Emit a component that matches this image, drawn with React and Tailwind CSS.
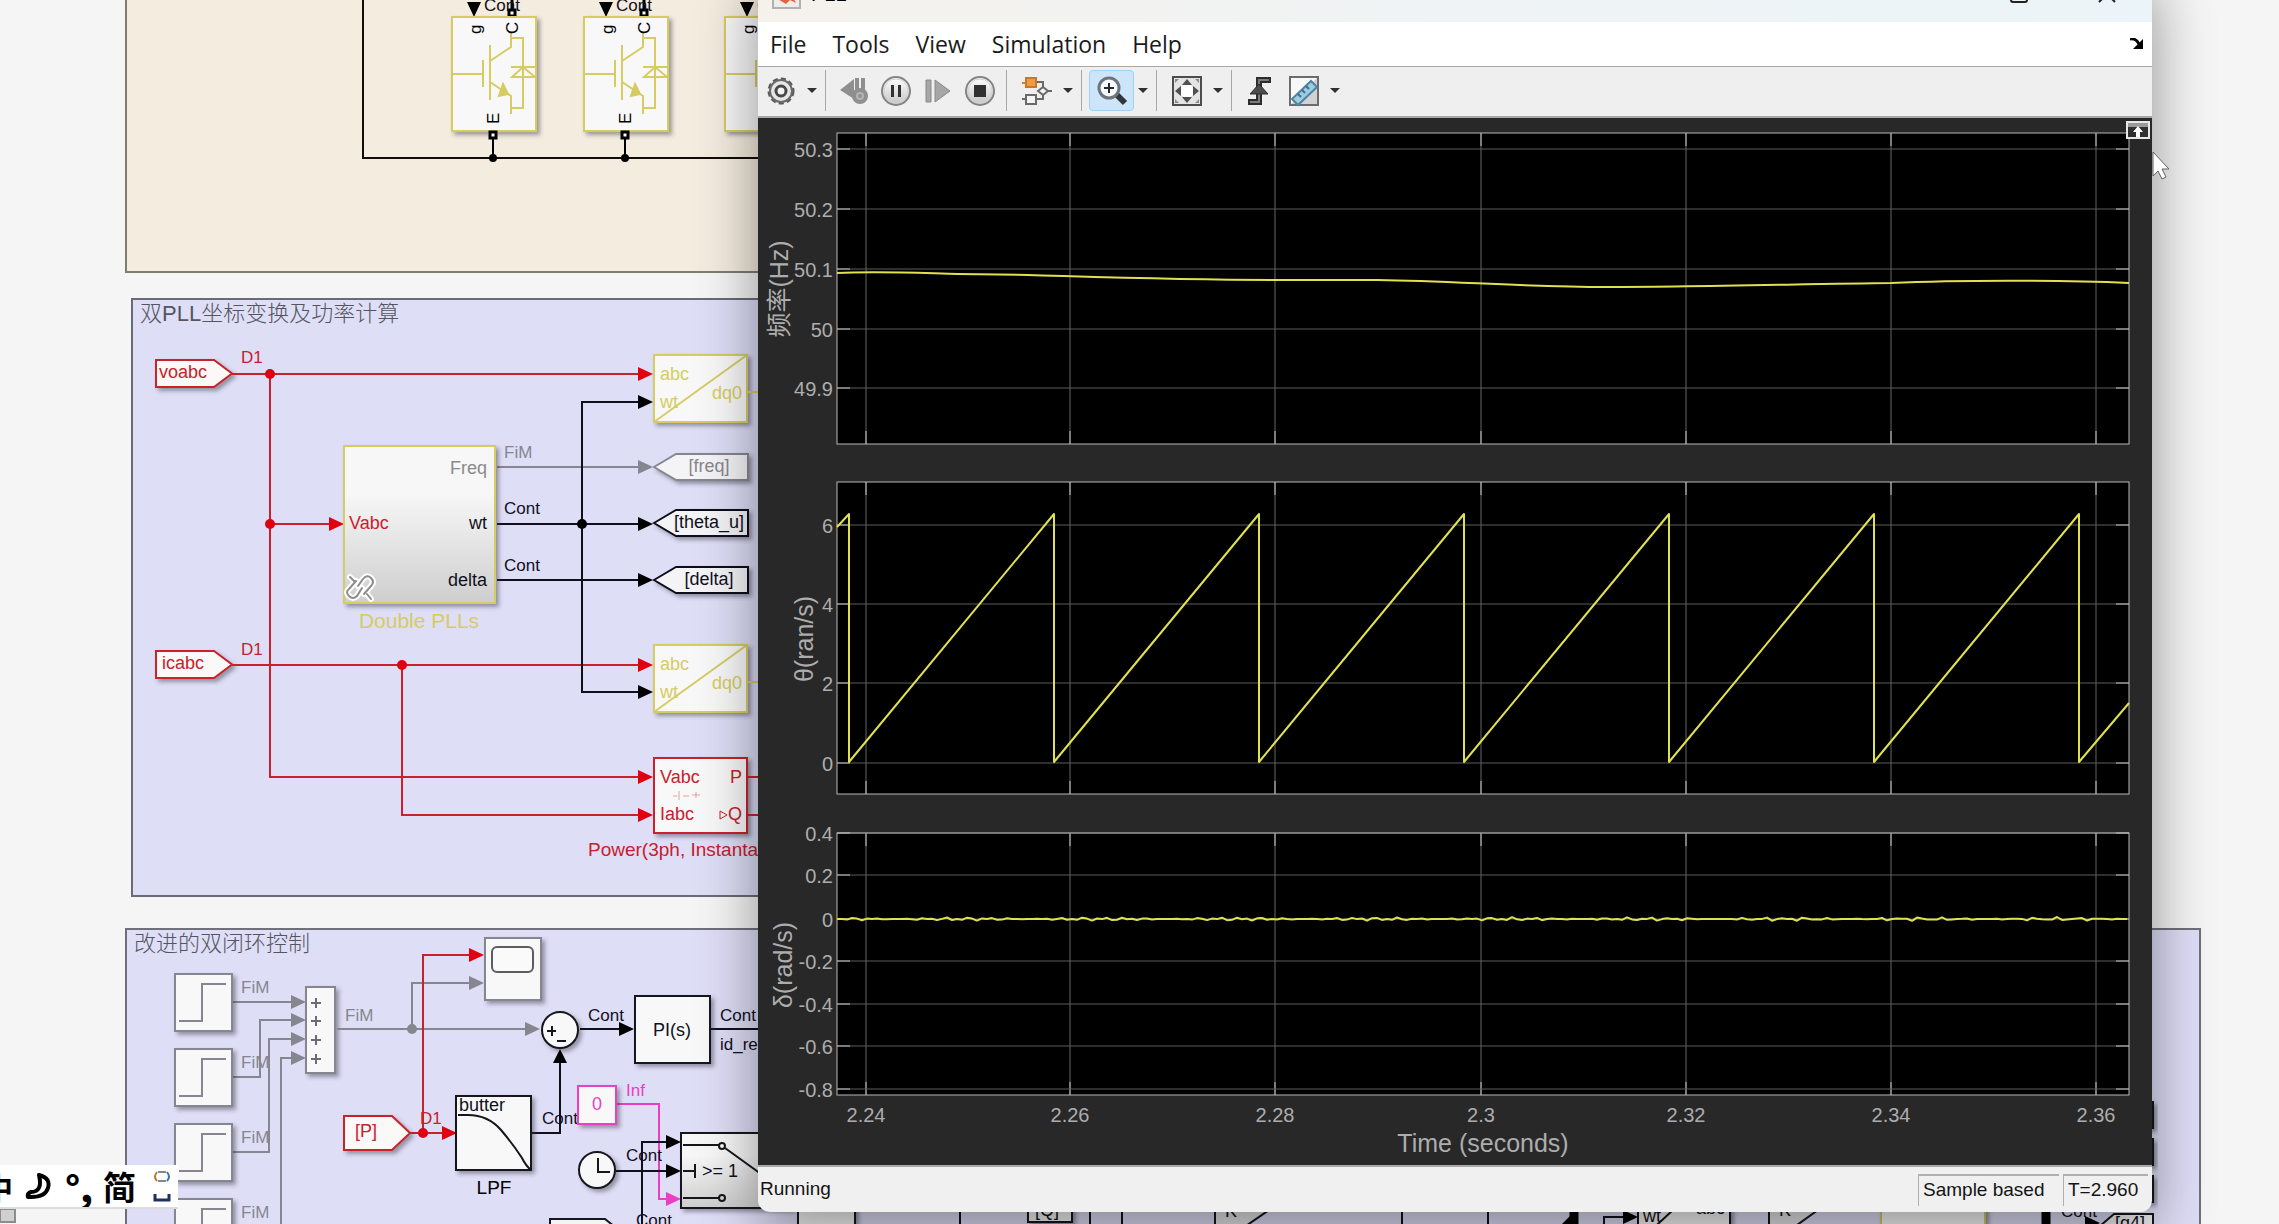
const RED = "#c8202c";
const GOLD = "#d6cc62";
const GRAY = "#868690";
const PINK = "#ea3fc4";

/* ---------- model canvas ---------- */

const Arrow = ({ x, y, color = "#000", up }) => (
  <path
    d={up ? `M${x} ${y}l-7 14h14z` : `M${x} ${y}l-15 -7v14z`}
    fill={color === RED ? "#e00010" : color}
  />
);

const Wire = ({ d, color = "#10101c", width = 2 }) => (
  <path d={d} fill="none" stroke={color} strokeWidth={width} />
);

const Dot = ({ x, y, color = "#000" }) => (
  <circle cx={x} cy={y} r="5" fill={color === RED ? "#e00010" : color} />
);

const Block = ({ x, y, w, h, color = "#16161c", fill = "#f8f8f8" }) => (
  <rect x={x} y={y} width={w} height={h} fill={fill} stroke={color} strokeWidth="2" filter="url(#drop)" />
);

// signal rate label
const Rate = ({ x, y, color = "#10101c", children }) => (
  <text x={x} y={y} fill={color} className="text-[17px]">
    {children}
  </text>
);

const Label = ({ x, y, color = "#10101c", anchor = "start", children }) => (
  <text x={x} y={y} fill={color} textAnchor={anchor} className="text-[18px]">
    {children}
  </text>
);

const Igbt = ({ x }) => (
  <g transform={`translate(${x} 0)`}>
    <path d="M16 2h14l-7 15z" />
    <path d="M61 0v10" stroke="#000" strokeWidth="3" />
    <rect x="58" y="10" width="6" height="6" fill="#fff" stroke="#000" strokeWidth="3" />
    <Rate x={33} y={11}>Cont</Rate>
    <Block x={1} y={17} w={84} h={114} color={GOLD} />
    <g fill="none" stroke={GOLD} strokeWidth="2">
      <path d="M2 74h29M32 60v27M39 45v55M39 61l21 -14v-14M39 82l21 14v18M60 38h12v70h-12" />
      <path d="M60 67h25M61 77h23l-12 -10z" />
      <path d="M52 84l5 10l-9 2z" fill={GOLD} />
    </g>
    <text transform="translate(30 34) rotate(-90)" className="text-[17px]">g</text>
    <text transform="translate(67 34) rotate(-90)" className="text-[17px]">C</text>
    <text transform="translate(48 124) rotate(-90)" className="text-[17px]">E</text>
    <rect x="39" y="132" width="6" height="6" fill="#fff" stroke="#000" strokeWidth="3" />
    <path d="M42 139v19" stroke="#000" strokeWidth="2" />
    <circle cx="42" cy="158" r="4" />
  </g>
);

const Dq0 = ({ y }) => (
  <g>
    <Block x={654} y={y} w={93} h={67} color={GOLD} />
    <path d={`M654 ${y + 67}L747 ${y}M748 ${y + 37}h10`} stroke={GOLD} strokeWidth="2" />
    <Label x={660} y={y + 25} color={GOLD}>abc</Label>
    <Label x={660} y={y + 53} color={GOLD}>wt</Label>
    <Label x={742} y={y + 44} color={GOLD} anchor="end">dq0</Label>
  </g>
);

const FromTag = ({ x, y, w, h, text }) => (
  <g>
    <path
      d={`M${x} ${y}h${w - 18}l18 ${h / 2}l-18 ${h / 2}h-${w - 18}z`}
      fill="#fbf8f8"
      stroke={RED}
      strokeWidth="2"
      filter="url(#drop)"
    />
    <Label x={x + w / 2 - 11} y={y + h / 2 + 4} color={RED} anchor="middle">
      {text}
    </Label>
  </g>
);

const GotoTag = ({ y, text, color }) => (
  <g>
    <path
      d={`M654 ${y + 13}l22 -13h72v26h-72z`}
      fill="#f4f4f6"
      stroke={color}
      strokeWidth="2"
      filter="url(#drop)"
    />
    <Label x={709} y={y + 18} color={color} anchor="middle">
      {text}
    </Label>
  </g>
);

const StepBlock = ({ y }) => (
  <g>
    <Block x={175} y={y} w={57} h={57} color={GRAY} />
    <path d={`M179 ${y + 47}h23v-37h24`} fill="none" stroke={GRAY} strokeWidth="2" />
    <Rate x={241} y={y + 19} color={GRAY}>FiM</Rate>
  </g>
);

const PowerStage = () => (
  <g>
    <rect x="126" y="-4" width="700" height="276" fill="#f4ecdf" stroke="#7d7d70" strokeWidth="2" />
    <Wire d="M363 0V158H800" color="#100c08" />
    <Igbt x={451} />
    <Igbt x={583} />
    <Igbt x={724} />
  </g>
);

const PllArea = () => (
  <g>
    <rect x="132" y="299" width="700" height="597" fill="#dedef7" stroke="#6a6a78" strokeWidth="2" />
    <text x="140" y="321" fill="#55555f" className="text-[22px] font-light">
      双PLL坐标变换及功率计算
    </text>

    <FromTag x={156} y={360} w={76} h={27} text="voabc" />
    <Rate x={241} y={363} color={RED}>D1</Rate>
    <Wire d="M232 374H640M270 374V777H640M270 524H330" color={RED} />
    <Dot x={270} y={374} color={RED} />
    <Dot x={270} y={524} color={RED} />
    <Arrow x={653} y={374} color={RED} />
    <Arrow x={344} y={524} color={RED} />
    <Arrow x={653} y={777} color={RED} />

    <FromTag x={156} y={651} w={76} h={27} text="icabc" />
    <Rate x={241} y={655} color={RED}>D1</Rate>
    <Wire d="M232 665H640M402 665V815H640" color={RED} />
    <Dot x={402} y={665} color={RED} />
    <Arrow x={653} y={665} color={RED} />
    <Arrow x={653} y={815} color={RED} />

    <Wire d="M497 467H640" color={GRAY} />
    <Arrow x={653} y={467} color={GRAY} />
    <Wire d="M497 524H640M497 580H640M640 402H582V692H640" />
    <Dot x={582} y={524} />
    <Arrow x={653} y={402} />
    <Arrow x={653} y={524} />
    <Arrow x={653} y={580} />
    <Arrow x={653} y={692} />
    <Rate x={504} y={458} color={GRAY}>FiM</Rate>
    <Rate x={504} y={514}>Cont</Rate>
    <Rate x={504} y={571}>Cont</Rate>

    <Block x={344} y={446} w={151} h={157} color={GOLD} fill="url(#subsystem)" />
    <Label x={487} y={474} color="#8a8a8a" anchor="end">Freq</Label>
    <Label x={349} y={529} color={RED}>Vabc</Label>
    <Label x={487} y={529} anchor="end">wt</Label>
    <Label x={487} y={586} anchor="end">delta</Label>
    <text x="419" y="628" fill={GOLD} textAnchor="middle" className="text-[21px]">
      Double PLLs
    </text>
    <g fill="none" strokeLinecap="round">
      <path
        d="M358 586l5 -7q4 -5 8 -1t0 8l-7 8M362 588l-5 8q-4 4 -8 0t0 -7l7 -8M350 577l5 5M367 594l4 5"
        stroke="#fff"
        strokeWidth="6"
      />
      <path
        d="M358 586l5 -7q4 -5 8 -1t0 8l-7 8M362 588l-5 8q-4 4 -8 0t0 -7l7 -8M350 577l5 5M367 594l4 5"
        stroke="#8c8c8c"
        strokeWidth="2"
      />
    </g>

    <Dq0 y={355} />
    <Dq0 y={645} />
    <GotoTag y={454} text="[freq]" color={GRAY} />
    <GotoTag y={510} text="[theta_u]" color="#10101c" />
    <GotoTag y={567} text="[delta]" color="#10101c" />

    <Block x={654} y={758} w={93} h={75} color={RED} />
    <Wire d="M748 777h20M748 815h20" color={RED} />
    <Label x={660} y={783} color={RED}>Vabc</Label>
    <Label x={742} y={783} color={RED} anchor="end">P</Label>
    <Label x={660} y={820} color={RED}>Iabc</Label>
    <Label x={742} y={820} color={RED} anchor="end">Q</Label>
    <path d="M720 811v8l7 -4z" fill="none" stroke={RED} />
    <path d="M673 796h4M679 791v9M683 796h6M692 795h8M696 792v6" stroke={RED} opacity="0.4" />
    <text x="588" y="856" fill={RED} className="text-[19px]">
      Power(3ph, Instantan
    </text>
  </g>
);

const ControlArea = () => (
  <g>
    <rect x="126" y="929" width="2074" height="310" fill="#dfdef7" stroke="#70707c" strokeWidth="2" />
    <text x="134" y="951" fill="#55555f" className="text-[22px] font-light">
      改进的双闭环控制
    </text>

    <Wire d="M233 1002H294M233 1077H260V1020H294M233 1152H269V1039H294M281 1224V1058H294" color={GRAY} />
    <StepBlock y={974} />
    <StepBlock y={1049} />
    <StepBlock y={1124} />
    <StepBlock y={1199} />
    <Block x={306} y={987} w={29} h={86} color={GRAY} />
    {[1002, 1020, 1039, 1058].map((y) => (
      <g key={y}>
        <Arrow x={306} y={y} color={GRAY} />
        <path d={`M311 ${y + 1}h10M316 ${y - 4}v10`} stroke="#6c6c74" strokeWidth="2" />
      </g>
    ))}

    <Wire d="M337 1029H528M412 1029V983H472" color={GRAY} />
    <Rate x={345} y={1021} color={GRAY}>FiM</Rate>
    <Dot x={412} y={1029} color={GRAY} />
    <Arrow x={484} y={983} color={GRAY} />
    <Arrow x={540} y={1029} color={GRAY} />
    <Wire d="M410 1133H445M423 1133V955H472" color={RED} />
    <Arrow x={484} y={955} color={RED} />
    <Arrow x={457} y={1133} color={RED} />
    <Dot x={423} y={1133} color={RED} />
    <Rate x={420} y={1124} color={RED}>D1</Rate>
    <FromTag x={344} y={1116} w={66} h={34} text="[P]" />

    <Block x={485} y={938} w={56} h={62} color={GRAY} />
    <rect x="492" y="947" width="41" height="25" rx="5" fill="#fafafa" stroke="#5c5c62" strokeWidth="2" />

    <circle cx="560" cy="1030" r="18" fill="#f8f8f8" stroke="#16161c" strokeWidth="2" filter="url(#drop)" />
    <path d="M547 1031h9M552 1026v10M557 1041h9" stroke="#16161c" strokeWidth="2" />
    <Wire d="M580 1029H622M711 1029H760M532 1133H560V1062" />
    <Arrow x={634} y={1029} />
    <Arrow x={560} y={1049} up />
    <Block x={635} y={996} w={75} h={67} />
    <Label x={672} y={1036} anchor="middle">PI(s)</Label>
    <Rate x={588} y={1021}>Cont</Rate>
    <Rate x={720} y={1021}>Cont</Rate>
    <Rate x={720} y={1050}>id_ref</Rate>

    <Block x={456} y={1096} w={75} h={74} />
    <path d="M458 1115h10q20 0 33 15q12 14 21 28q4 8 9 12" fill="none" stroke="#16161c" strokeWidth="2" />
    <Label x={459} y={1111}>butter</Label>
    <text x="494" y="1194" textAnchor="middle" className="text-[19px]">LPF</text>
    <Rate x={542} y={1124}>Cont</Rate>

    <Wire d="M617 1104H659V1199H670" color={PINK} />
    <Arrow x={681} y={1199} color={PINK} />
    <Block x={578} y={1086} w={38} h={38} color={PINK} />
    <Label x={597} y={1110} color={PINK} anchor="middle">0</Label>
    <Rate x={626} y={1096} color={PINK}>Inf</Rate>

    <circle cx="597" cy="1170" r="18" fill="#f8f8f8" stroke="#16161c" strokeWidth="2" filter="url(#drop)" />
    <path d="M598 1158v14h12" fill="none" stroke="#16161c" strokeWidth="2" />
    <Wire d="M616 1171H670M642 1224V1142H670" />
    <Arrow x={681} y={1142} />
    <Arrow x={681} y={1171} />
    <Rate x={626} y={1161}>Cont</Rate>
    <Rate x={636} y={1226}>Cont</Rate>
    <Block x={681} y={1133} w={110} h={75} fill="url(#subsystem)" />
    <g fill="none" stroke="#16161c" strokeWidth="2">
      <path d="M683 1145h36M725 1148l36 26M683 1171h11M695 1164v14M683 1198h36" />
      <circle cx="722" cy="1146" r="3" />
      <circle cx="722" cy="1198" r="3" />
      <path d="M550 1230v-11h55l10 8" fill="#f4f4f4" />
    </g>
    <Label x={702} y={1177}>&gt;= 1</Label>

    {/* second row of blocks, mostly behind the scope window */}
    <Block x={798} y={1180} w={57} h={60} />
    <Wire d="M960 1190V1224M1090 1190V1224M1122 1190V1224M1402 1190V1224M1488 1190V1224" />
    <Block x={1028} y={1190} w={44} h={32} />
    <Label x={1035} y={1216}>[Q]</Label>
    <path d="M1215 1190L1275 1206L1240 1230H1215z" fill="#e6e6ea" stroke="#16161c" strokeWidth="2" />
    <Label x={1225} y={1217}>K</Label>
    <path d="M1574 1190V1224M2046 1190V1224" stroke="#000" strokeWidth="9" />
    <path d="M1562 1224l14 -14v14z" />
    <Wire d="M1604 1224V1217H1625" />
    <Arrow x={1638} y={1217} />
    <Block x={1638} y={1180} w={92} h={60} />
    <path d="M1645 1236L1673 1210" stroke="#16161c" strokeWidth="2" />
    <Label x={1643} y={1222}>wt</Label>
    <Label x={1696} y={1214}>abc</Label>
    <path d="M1769 1190L1825 1205L1790 1230H1769z" fill="#e6e6ea" stroke="#16161c" strokeWidth="2" />
    <Label x={1779} y={1216}>K</Label>
    <Block x={1881} y={1180} w={104} h={60} color={GOLD} />
    <Rate x={2061} y={1217}>Cont</Rate>
    <Arrow x={2100} y={1223} />
    <path d="M2100 1226l14 -12h39v16" fill="#f4f4f6" stroke="#16161c" strokeWidth="2" />
    <Label x={2115} y={1229}>[q4]</Label>
    {[1102, 1139, 1176].map((y) => (
      <rect key={y} x="2138" y={y} width="15" height="26" fill="#f4f4f6" stroke="#16161c" strokeWidth="2" filter="url(#drop)" />
    ))}
  </g>
);

const ModelCanvas = () => (
  <svg
    viewBox="0 0 2279 1224"
    className="block w-full h-auto font-['Liberation_Sans','Noto_Sans_CJK_SC',sans-serif]"
  >
    <defs>
      <filter id="drop" x="-20%" y="-20%" width="150%" height="150%">
        <feDropShadow dx="3" dy="3" stdDeviation="2" floodColor="#303040" floodOpacity="0.45" />
      </filter>
      <linearGradient id="subsystem" x1="0" y1="0" x2="0" y2="1">
        <stop offset="0.3" stopColor="#f7f7f7" />
        <stop offset="1" stopColor="#cecece" />
      </linearGradient>
    </defs>
    <PowerStage />
    <PllArea />
    <ControlArea />
    <path d="M0 1209h15v13h-15z" fill="#d0d0d0" stroke="#8c8c8c" strokeWidth="2" />
  </svg>
);

/* ---------- toolbar icons ---------- */

const GearIcon = () => (
  <svg width="30" height="30" viewBox="0 0 30 30">
    <circle cx="15" cy="15" r="12" fill="none" stroke="#5a5a5a" strokeWidth="3" strokeDasharray="5 3" />
    <circle cx="15" cy="15" r="11" fill="#e6e6e6" stroke="#6a6a6a" strokeWidth="2" />
    <circle cx="15" cy="15" r="5" fill="#f4f4f4" stroke="#484848" strokeWidth="3" />
  </svg>
);

const StepBackIcon = () => (
  <svg width="30" height="30" viewBox="0 0 30 30" fill="#8f8f8f">
    <path d="M1 14L15 3V23zM16 2h4v12h-4zM22 2h4v12h-4z" />
    <circle cx="21" cy="20" r="8" />
    <circle cx="21" cy="20" r="3" fill="none" stroke="#b4b4b4" strokeWidth="2" />
  </svg>
);

const RoundIcon = ({ children }) => (
  <svg width="32" height="32" viewBox="0 0 32 32">
    <circle cx="16" cy="16" r="14" fill="url(#knob)" stroke="#848484" strokeWidth="2" />
    <circle cx="16" cy="16" r="12" fill="none" stroke="#d2d2d2" strokeWidth="1" />
    <defs>
      <linearGradient id="knob" x1="0" y1="0" x2="0" y2="1">
        <stop offset="0" stopColor="#ffffff" />
        <stop offset="1" stopColor="#c4c4c4" />
      </linearGradient>
    </defs>
    {children}
  </svg>
);

const StepForwardIcon = () => (
  <svg width="28" height="28" viewBox="0 0 28 28" fill="#a6a6a6" stroke="#8a8a8a">
    <path d="M2 3h5v22h-5zM11 3v22L26 14z" />
  </svg>
);

const ModelIcon = () => (
  <svg width="32" height="32" viewBox="0 0 32 32" fill="none" stroke="#6a6a6a" strokeWidth="2">
    <path d="M1 8h4" stroke="#d98230" />
    <rect x="5" y="3" width="10" height="9" fill="#ef9b45" stroke="#d27520" />
    <path d="M16 7h6v6M1 24h4M16 24h6v-5M27 16h4" />
    <rect x="5" y="20" width="10" height="9" fill="#f4f4f4" />
    <path d="M17 16l5 -4l5 4l-5 4z" fill="#f4f4f4" />
  </svg>
);

const ZoomIcon = () => (
  <svg width="32" height="32" viewBox="0 0 32 32">
    <path d="M20 19l9 9" stroke="#30363c" strokeWidth="6" />
    <circle cx="13" cy="13" r="10" fill="#f6fafc" stroke="#6c747c" strokeWidth="3" />
    <path d="M8 13h10M13 8v10" stroke="#24282c" strokeWidth="2" />
  </svg>
);

const FitIcon = () => (
  <svg width="32" height="32" viewBox="0 0 32 32">
    <rect x="2" y="2" width="28" height="28" fill="#e4e4e4" stroke="#4c4c4c" strokeWidth="2" />
    <circle cx="16" cy="16" r="7" fill="#fff" />
    <path d="M16 4l5 6h-10zM16 28l5 -6h-10zM4 16l6 -5v10zM28 16l-6 -5v10z" fill="#505050" />
    <path d="M4 4h4l-4 4zM28 4h-4l4 4zM4 28h4l-4 -4zM28 28h-4l4 -4z" fill="#8c8c8c" />
  </svg>
);

const TriggerIcon = () => (
  <svg width="30" height="32" viewBox="0 0 30 32">
    <path d="M3 27h11V5h12" fill="none" stroke="#2c2c2c" strokeWidth="6" />
    <path d="M5 27h9V5h10" fill="none" stroke="#7c7c7c" strokeWidth="2" />
    <path d="M14 9l9 10h-18z" fill="#4c4c4c" stroke="#2c2c2c" />
  </svg>
);

const MeasureIcon = () => (
  <svg width="32" height="32" viewBox="0 0 32 32">
    <path d="M2 2h28v28h-28z" fill="#f8f8f8" stroke="#6c6c6c" strokeWidth="2" />
    <path d="M29 3v26h-26z" fill="#d2d2d2" />
    <path d="M23 6l6 6l-19 18l-6 -6z" fill="#9fcbe0" stroke="#4b84a4" strokeWidth="2" />
    <path d="M10 19l3 3M14 15l3 3M18 11l3 3" stroke="#3c7090" strokeWidth="2" />
  </svg>
);

/* ---------- scope window ---------- */

const ToolButton = ({ label, wide, active, children }) => (
  <button
    type="button"
    aria-label={label}
    className={`flex h-[41px] items-center justify-center rounded-sm border ${wide ? "w-[45px]" : "w-[42px]"} ${
      active ? "border-[#9fd0f5] bg-[#cce5fb]" : "border-transparent"
    }`}
  >
    {children}
  </button>
);

const MenuArrow = ({ label }) => (
  <button type="button" aria-label={label} className="flex h-[41px] w-[17px] items-center justify-center">
    <svg width="10" height="6" viewBox="0 0 10 6">
      <path d="M0 0h10l-5 5z" fill="#303030" />
    </svg>
  </button>
);

const ToolGroup = ({ first, children }) => (
  <div className={`flex items-center pr-[5px] ${first ? "" : "border-l border-[#a8a8a8] pl-[7px]"}`}>{children}</div>
);

const TitleBar = () => (
  <header className="flex h-14 shrink-0 items-center bg-linear-to-r from-[#f5f2ec] via-[#eff3f5] to-[#ebf4f8] px-3.5">
    <svg width="29" height="29" viewBox="0 0 29 29">
      <rect x="1" y="1" width="27" height="27" fill="#ececec" stroke="#b0b0b0" strokeWidth="2" />
      <path d="M4 18l6 -4l5 -9l9 18l-6 -3l-4 4z" fill="#e0653a" />
    </svg>
    <h1 className="ml-2.5 text-[20px]">PLL</h1>
    <div className="ml-auto flex items-center gap-[70px] pr-[22px]">
      <button type="button" aria-label="Minimize">
        <svg width="18" height="18" viewBox="0 0 18 18" stroke="#222" strokeWidth="2">
          <path d="M0 9h18" />
        </svg>
      </button>
      <button type="button" aria-label="Maximize">
        <svg width="18" height="18" viewBox="0 0 18 18" fill="none" stroke="#222" strokeWidth="2">
          <rect x="1" y="1" width="16" height="16" rx="2" />
        </svg>
      </button>
      <button type="button" aria-label="Close">
        <svg width="18" height="18" viewBox="0 0 18 18" stroke="#222" strokeWidth="2">
          <path d="M1 1l16 16M17 1l-16 16" />
        </svg>
      </button>
    </div>
  </header>
);

const MenuBar = () => (
  <nav className="flex h-[45px] shrink-0 items-center gap-[26px] border-b border-[#a8a8a8] bg-white pr-2 pl-3 font-['Open_Sans',sans-serif] text-[23px] leading-8 text-[#1a1a1a]">
    {["File", "Tools", "View", "Simulation", "Help"].map((item) => (
      <button key={item} type="button">
        {item}
      </button>
    ))}
    <button type="button" aria-label="Dock" className="ml-auto">
      <svg width="14" height="12" viewBox="0 0 14 12">
        <path d="M0 1q6 -1 9 5" fill="none" stroke="#000" strokeWidth="3" />
        <path d="M13 1v10h-10z" />
      </svg>
    </button>
  </nav>
);

const Toolbar = () => (
  <div className="flex h-[51px] shrink-0 items-center border-b-2 border-[#a8a8a8] bg-[#efefef] pb-0.5">
    <ToolGroup first>
      <ToolButton label="Configuration" wide><GearIcon /></ToolButton>
      <MenuArrow label="Configuration options" />
    </ToolGroup>
    <ToolGroup>
      <ToolButton label="Step back"><StepBackIcon /></ToolButton>
      <ToolButton label="Pause">
        <RoundIcon><path d="M11 10h3v12h-3zM18 10h3v12h-3z" fill="#303030" /></RoundIcon>
      </ToolButton>
      <ToolButton label="Step forward"><StepForwardIcon /></ToolButton>
      <ToolButton label="Stop">
        <RoundIcon><path d="M10 10h12v12h-12z" fill="#303030" /></RoundIcon>
      </ToolButton>
    </ToolGroup>
    <ToolGroup>
      <ToolButton label="Highlight block" wide><ModelIcon /></ToolButton>
      <MenuArrow label="Highlight options" />
    </ToolGroup>
    <ToolGroup>
      <ToolButton label="Zoom in" wide active><ZoomIcon /></ToolButton>
      <MenuArrow label="Zoom options" />
    </ToolGroup>
    <ToolGroup>
      <ToolButton label="Fit to view" wide><FitIcon /></ToolButton>
      <MenuArrow label="Fit options" />
    </ToolGroup>
    <ToolGroup>
      <ToolButton label="Triggers"><TriggerIcon /></ToolButton>
      <ToolButton label="Measurements" wide><MeasureIcon /></ToolButton>
      <MenuArrow label="Measurement options" />
    </ToolGroup>
  </div>
);

const X_TICKS = [
  [108, "2.24"],
  [312, "2.26"],
  [517, "2.28"],
  [723, "2.3"],
  [928, "2.32"],
  [1133, "2.34"],
  [1338, "2.36"],
];
const LEFT = 79;
const RIGHT = 1371;

const Axes = ({ top, bottom, ticks, title, titleX, titleY, children }) => (
  <g>
    <rect x={LEFT} y={top} width={RIGHT - LEFT} height={bottom - top} fill="#000" />
    {X_TICKS.map(([x]) => (
      <g key={x}>
        <path d={`M${x} ${top}V${bottom}`} stroke="#666" />
        <path d={`M${x} ${top}v13M${x} ${bottom}v-13`} stroke="#c8c8c8" />
      </g>
    ))}
    {ticks.map(([y, label]) => (
      <g key={label}>
        <path d={`M${LEFT} ${y}H${RIGHT}`} stroke="#5c5c5c" />
        <path d={`M${LEFT} ${y}h13M${RIGHT} ${y}h-13`} stroke="#c8c8c8" />
        <text x="75" y={y + 8} textAnchor="end" className="text-[20px]">
          {label}
        </text>
      </g>
    ))}
    <rect x={LEFT} y={top} width={RIGHT - LEFT} height={bottom - top} fill="none" stroke="#b8b8b8" />
    <g fill="none" stroke="#e0e050" strokeWidth="2" strokeLinejoin="round">
      {children}
    </g>
    <text transform={`translate(${titleX} ${titleY}) rotate(-90)`} textAnchor="middle" className="text-[25px]">
      {title}
    </text>
  </g>
);

const sawtooth = () => {
  let d = "M79 409L91 396V644";
  for (let i = 1; i <= 6; i++) {
    const x = 91 + i * 205;
    d += `L${x} 396V644`;
  }
  return d + "L1371 585";
};

const ripple = () => {
  let d = "M79 801";
  for (let x = 84; x <= RIGHT; x += 5) {
    const y = 801 + Math.sin(x * 0.41) * Math.sin(x * 0.023) * Math.sin(x * 0.11) * 2;
    d += `L${x} ${y.toFixed(1)}`;
  }
  return d;
};

const Plots = () => (
  <div className="relative min-h-0 flex-1 bg-[#282828]">
    <svg
      viewBox="0 0 1394 1047"
      className="block h-full w-full fill-[#adadad] font-['Liberation_Sans','Noto_Sans_CJK_SC',sans-serif]"
    >
      <Axes
        top={15}
        bottom={326}
        title="频率(Hz)"
        titleX={30}
        titleY={171}
        ticks={[[31, "50.3"], [91, "50.2"], [151, "50.1"], [211, "50"], [270, "49.9"]]}
      >
        <path d="M79 155C120 153 160 155 200 156L270 157C340 159 420 162 517 162L620 162C700 163 760 169 850 169C930 169 1050 166 1133 165C1200 162 1300 162 1371 165" />
      </Axes>
      <Axes
        top={364}
        bottom={676}
        title="θ(ran/s)"
        titleX={55}
        titleY={521}
        ticks={[[407, "6"], [486, "4"], [565, "2"], [645, "0"]]}
      >
        <path d={sawtooth()} />
      </Axes>
      <Axes
        top={715}
        bottom={977}
        title="δ(rad/s)"
        titleX={34}
        titleY={847}
        ticks={[
          [715, "0.4"],
          [757, "0.2"],
          [801, "0"],
          [843, "-0.2"],
          [886, "-0.4"],
          [928, "-0.6"],
          [971, "-0.8"],
        ]}
      >
        <path d={ripple()} />
      </Axes>
      {X_TICKS.map(([x, label]) => (
        <text key={label} x={x} y="1004" textAnchor="middle" className="text-[20px]">
          {label}
        </text>
      ))}
      <text x="725" y="1034" textAnchor="middle" className="text-[25px]">
        Time (seconds)
      </text>
    </svg>
    <button
      type="button"
      aria-label="Maximize axes"
      className="absolute top-[3px] right-0.5 h-[18px] w-6 border-2 border-[#e8e8e8] bg-[#303030]"
    >
      <svg viewBox="0 0 20 14" className="block h-full w-full">
        <path d="M0 0h20v4h-20z" fill="#9a9a9a" />
        <path d="M10 3l5 6h-3v5h-4v-5h-3z" fill="#fff" />
      </svg>
    </button>
  </div>
);

const StatusBar = () => (
  <footer className="flex h-[47px] shrink-0 items-center gap-1 border-t-2 border-[#a8a8a8] bg-[#f0f0f0] pr-1 text-[19px] text-[#141414]">
    <span className="mr-auto pl-0.5">Running</span>
    <span className="flex h-8 w-[141px] items-center border-t-2 border-l border-[#b0b0b0] pl-1">Sample based</span>
    <span className="flex h-8 w-[85px] items-center border-t-2 border-l border-[#b0b0b0] pl-1">T=2.960</span>
  </footer>
);

const ScopeWindow = () => (
  <section className="absolute -top-[34px] right-[127px] bottom-3 left-[758px] flex flex-col overflow-hidden rounded-xl shadow-[0_20px_60px_0_rgba(0,0,0,0.42)]">
    <TitleBar />
    <MenuBar />
    <Toolbar />
    <Plots />
    <StatusBar />
  </section>
);

/* ---------- overlays ---------- */

const ImeBar = () => (
  <div className="absolute bottom-[15px] left-0 flex h-11 w-[178px] items-center overflow-hidden border-b-2 border-[#dcdcdc] bg-white font-['Noto_Sans_CJK_SC',sans-serif] text-black">
    <button type="button" className="-ml-[17px] text-[30px] leading-10 font-bold">中</button>
    <button type="button" aria-label="Half width" className="ml-3">
      <svg width="28" height="28" viewBox="0 0 28 28">
        <path d="M14 3q12 3 9 13t-20 9q-1 -4 3 -5q12 0 8 -17z" fill="none" stroke="#000" strokeWidth="4" strokeLinejoin="round" />
      </svg>
    </button>
    <button type="button" className="ml-3 text-[36px] leading-10 font-black">°,</button>
    <button type="button" className="ml-auto text-[33px] leading-10 font-bold">简</button>
    <button type="button" aria-label="Settings" className="mr-1.5 ml-4">
      <svg width="20" height="32" viewBox="0 0 20 32" fill="none" strokeWidth="2">
        <path d="M5 11q-4 -4 0 -9" stroke="#b87830" />
        <path d="M15 11q4 -4 0 -9" stroke="#3c70b0" />
        <path d="M6 2h8M6 11h8" stroke="#888" />
        <path d="M3 24v6h14v-6" stroke="#203060" strokeWidth="3" />
      </svg>
    </button>
  </div>
);

const Pointer = () => (
  <svg width="18" height="30" viewBox="0 0 18 30" className="absolute top-[151px] right-[109px]">
    <path d="M1 1v24l5 -5l4 8l4 -2l-4 -8h7z" fill="#fff" stroke="#606060" />
  </svg>
);

const App = () => {
  return (
    <main className="relative min-h-screen overflow-hidden bg-[#f5f5f5] font-['Liberation_Sans',sans-serif]">
      <ModelCanvas />
      <ScopeWindow />
      <ImeBar />
      <Pointer />
    </main>
  );
};

export default App;
